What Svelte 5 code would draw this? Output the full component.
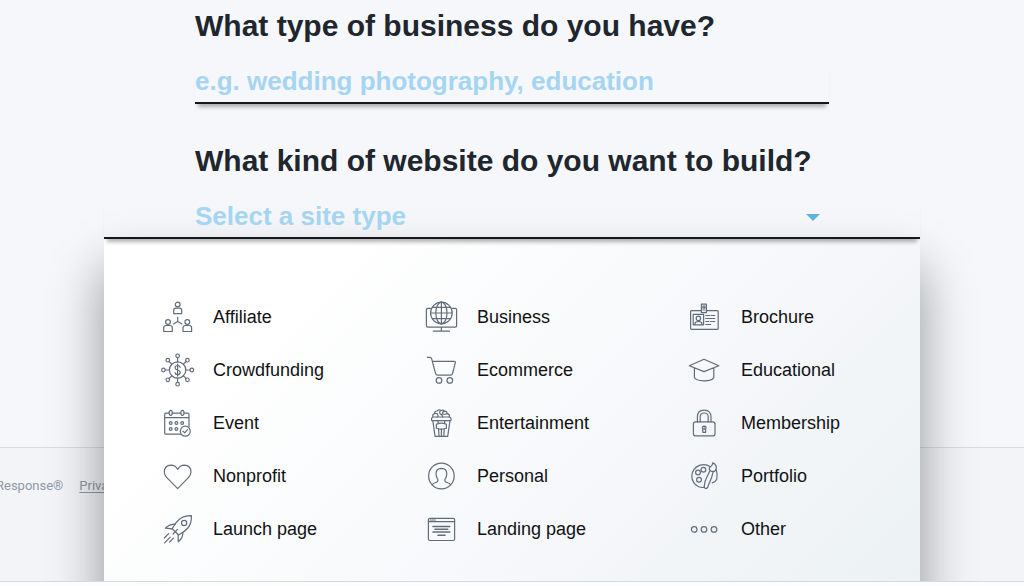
<script lang="ts">
	const siteTypes = [
		{ id: 'affiliate', label: 'Affiliate' },
		{ id: 'business', label: 'Business' },
		{ id: 'brochure', label: 'Brochure' },
		{ id: 'crowdfunding', label: 'Crowdfunding' },
		{ id: 'ecommerce', label: 'Ecommerce' },
		{ id: 'educational', label: 'Educational' },
		{ id: 'event', label: 'Event' },
		{ id: 'entertainment', label: 'Entertainment' },
		{ id: 'membership', label: 'Membership' },
		{ id: 'nonprofit', label: 'Nonprofit' },
		{ id: 'personal', label: 'Personal' },
		{ id: 'portfolio', label: 'Portfolio' },
		{ id: 'launch', label: 'Launch page' },
		{ id: 'landing', label: 'Landing page' },
		{ id: 'other', label: 'Other' }
	];

	let business = $state('');
	let siteType = $state('');
	let open = $state(true);

	function choose(id: string) {
		siteType = id;
		open = false;
	}
</script>

{#snippet icon(id: string)}
	<svg class="icon" viewBox="0 0 34 34" aria-hidden="true">
		{#if id === 'affiliate'}
			<circle cx="17.7" cy="4.5" r="2.4" />
			<path d="M13.7 13.7v-3.2q0-2.4 2.2-2.4h3.6q2.2 0 2.2 2.4v3.2z" />
			<circle cx="8" cy="22" r="2.4" />
			<path d="M3.7 31.5v-3.4q0-2.6 2.3-2.6h4q2.3 0 2.3 2.6v3.4z" />
			<circle cx="27.3" cy="22" r="2.4" />
			<path d="M23 31.5v-3.4q0-2.6 2.3-2.6h4q2.3 0 2.3 2.6v3.4z" />
			<path d="M17.7 17v4.6L13.5 24M17.7 21.6l4.2 2.4" />
		{:else if id === 'business'}
			<path d="M6.6 8.4H3.8q-1.4 0-1.4 1.4v16q0 1.4 1.4 1.4h27.4q1.4 0 1.4-1.4v-16q0-1.4-1.4-1.4H28M17.4 27.4V31M9.3 31.2h16.2" />
			<circle cx="17.4" cy="13" r="10.8" />
			<ellipse cx="17.4" cy="13" rx="5.6" ry="10.8" />
			<path d="M17.4 2.2v21.6M6.6 13h21.6M8.6 7.4h17.6M8.6 18.6h17.6" />
		{:else if id === 'brochure'}
			<path d="M13.3 10.7H3.6q-1 0-1 1v16.6q0 1 1 1h25.6q1 0 1-1V11.7q0-1-1-1H18.5" />
			<path d="M13.4 4.2h5v8.4h-5zM15 6.2h1.8v2H15zM15 10h1.8" />
			<path d="M5.2 14.4h10.4v10.4H5.2zM6.9 24.6v-1.2q0-1.6 3.5-1.9 3.5.3 3.5 1.9v1.2" />
			<circle cx="10.4" cy="18.4" r="2.2" />
			<path d="M17.8 15.5h4M23.3 15.5h3.5M17.8 18.5h9M17.8 21.5h3M22.5 21.5h4.3M17.8 24.5h5" />
		{:else if id === 'crowdfunding'}
			<circle cx="17.6" cy="17" r="8.2" />
			<circle cx="17.6" cy="2.8" r="1.8" />
			<circle cx="17.6" cy="31.2" r="1.8" />
			<circle cx="3.4" cy="17" r="1.8" />
			<circle cx="31.8" cy="17" r="1.8" />
			<circle cx="7.8" cy="7.2" r="1.8" />
			<circle cx="27.4" cy="7.2" r="1.8" />
			<circle cx="7.8" cy="26.8" r="1.8" />
			<circle cx="27.4" cy="26.8" r="1.8" />
			<path d="M17.6 4.6v4.2M17.6 25.2v4.2M5.2 17h4.2M25.8 17H30M9.1 8.5l2.7 2.7M26.1 8.5l-2.7 2.7M9.1 25.5l2.7-2.7M26.1 25.5l-2.7-2.7" />
			<path d="M20.2 14.5q-.4-2-2.6-2-2.5 0-2.5 2.2 0 1.6 2.5 2.3 2.6.7 2.6 2.4 0 2.2-2.6 2.2-2.3 0-2.6-2M17.6 11v12" />
		{:else if id === 'ecommerce'}
			<path d="M3.3 4.3h2.4q1.6 0 2 1.6l3.8 14.4q.5 1.9 2.4 1.9h12.7q1.5 0 1.9-1.5l2.8-10.9q.3-1.4-1.2-1.4H8.6" />
			<circle cx="15" cy="27.4" r="2.8" />
			<circle cx="25.8" cy="27.4" r="2.8" />
		{:else if id === 'educational'}
			<path d="M1.3 12.7L16 6.2l14.8 6.5L16 18.6zM6.4 15v9.4q1.2 3.4 9.6 3.4t9.8-3.4V15" />
		{:else if id === 'event'}
			<path d="M9.2 7.2H6q-1.3 0-1.3 1.3v18.4q0 1.3 1.3 1.3h14.5M12.3 7.2h8.5M24 7.2h3.7q1.3 0 1.3 1.3v12.3M4.7 11.6H29" />
			<ellipse cx="10.7" cy="6.8" rx="1.6" ry="2.5" />
			<ellipse cx="22.4" cy="6.8" rx="1.6" ry="2.5" />
			<circle cx="10.7" cy="17" r="1.4" />
			<circle cx="16.4" cy="17" r="1.4" />
			<circle cx="22.2" cy="17" r="1.4" />
			<circle cx="10.7" cy="23" r="1.4" />
			<circle cx="16.4" cy="23" r="1.4" />
			<circle cx="25.3" cy="25.2" r="5" />
			<path d="M23 25.2l1.7 1.6 2.9-3.2" />
		{:else if id === 'entertainment'}
			<path d="M7.7 14.6q-.7-3.4 1.6-3.6h16q2.3.2 1.6 3.6zM8.8 14.6l2.3 15.8h12.6L26 14.6M13.8 14.6l.6 3M21 14.6l-.6 3M14.6 23l.4 7.4M20.2 23l-.4 7.4M17.4 23v7.4" />
			<path d="M9 11q-1-2.6 1.6-3.3-.1-2.9 2.6-2.7 1.5-1.9 3.6-.4 2.2-1.3 3.6.5 2.6-.1 2.8 2.6 3 .7 2.1 3.3M11 7.7q2.2-.8 2.9 1.3.7 2-1 2M16.8 4.6q-2 1.6-.6 3.2 2.3.6 2.4 3.2M20.4 5.1q-2.2.7-1.6 2.9 2.4.6 4.4-.3" />
			<path d="M12.4 18.2q5-2 10 0v4q-5 2-10 0z" />
		{:else if id === 'membership'}
			<rect x="5.4" y="15.9" width="21.6" height="14" rx="2.2" />
			<path d="M9.4 15.9V11q0-6.8 6.8-6.8T23 11v4.9M12.2 15.9V11q0-4 4-4t4 4v4.9M14.8 23q-1.3-2.6 1.4-2.8 2.7.2 1.4 2.8v3.3h-2.8zM16.2 21.8v1.6" />
		{:else if id === 'nonprofit'}
			<path d="M17.7 29.6L6.6 18.3Q4.3 15.9 4.3 12.9q0-6.6 6.8-6.8 4.5 0 6.6 4.4 2.1-4.4 6.6-4.4 6.6.2 6.6 6.8 0 3-2.3 5.4z" />
		{:else if id === 'personal'}
			<circle cx="17.4" cy="17" r="12.8" />
			<path d="M8.2 25.8q.9-1.6 3.7-2.3 2.6-.7 1.9-3.1-1.6-2.3-1.8-5.5Q12 9.4 17.4 9.3q5.4.1 5.4 5.6-.2 3.2-1.8 5.5-.7 2.4 1.9 3.1 2.8.7 3.7 2.3" />
		{:else if id === 'portfolio'}
			<path d="M21.8 7.4Q17.5 4.5 11.5 6.4 4.2 9.4 3.8 17q.2 7.6 6.9 10.8 3.2 1.2 5.3.4" />
			<circle cx="10" cy="13.5" r="2.4" />
			<circle cx="15.4" cy="10.7" r="2.4" />
			<circle cx="11" cy="20.7" r="2.4" />
			<path d="M24.7 3.9q4 1.6 3.6 5.4-.5 2.8-3.2 3.4-3.2-.3-3.9-2.9 0-1.7 1.9-2.6 1.5-1 1.6-3.3zM21.8 11.9L19.4 17M25.2 12.7l-1.6 5.8M19.4 17q-2.8 4.6-3.2 10.4.2 2.4 2.3 2 1.4-.6 1.8-2.8l3.3-8.1M28.2 10.4q1.6 5.2.6 9.8-1.4 3-4.6 3.6" />
		{:else if id === 'launch'}
			<path d="M31.4 3.7q.4 7.6-3.6 12.3-3.4 4.1-9.2 7l-6.4-6.2q2.8-5.8 6.9-9.3 4.7-3.9 12.3-3.8z" />
			<circle cx="24.1" cy="11" r="2.6" />
			<path d="M15.5 12.1q-6-.1-10.2 4.1l7 .7M22.9 20.3q.2 5.6-4.6 9.5l-.2-6.6M17.6 17.4L13 22M8.7 21.6L4.4 26M10.2 25.2l-5.6 5.6M13.4 26.2L9.6 30" />
		{:else if id === 'landing'}
			<rect x="4.4" y="6.3" width="26.2" height="22.2" rx="1.4" />
			<path d="M4.4 9.6h26.2M6.1 8h1M8.2 8h1M10.3 8h1" />
			<path class="bold" d="M9 14.5h16.8M11 17.3h12.8M9 20h16.8M14 23.3h7" />
		{:else}
			<circle cx="6.2" cy="17.4" r="2.8" />
			<circle cx="16" cy="17.4" r="2.8" />
			<circle cx="26" cy="17.4" r="2.8" />
		{/if}
	</svg>
{/snippet}

<div class="page">
	<main>
		<form class="survey">
			<div class="question">
				<label for="business">What type of business do you have?</label>
				<div class="field">
					<input
						id="business"
						type="text"
						placeholder="e.g. wedding photography, education"
						bind:value={business}
					/>
				</div>
			</div>

			<div class="question">
				<label for="site-type">What kind of website do you want to build?</label>
				<div class="field wide">
					<select
						id="site-type"
						class:empty={!siteType}
						bind:value={siteType}
						onfocus={() => open = true}
					>
						<option value="">Select a site type</option>
						{#each siteTypes as type}
							<option value={type.id}>{type.label}</option>
						{/each}
					</select>
					<svg class="caret" viewBox="0 0 14 7" aria-hidden="true">
						<path d="M0 0h14L7 7z" />
					</svg>
				</div>

				{#if open}
					<div class="menu">
						{#each siteTypes as type}
							<button type="button" class="choice" onclick={() => choose(type.id)}>
								{@render icon(type.id)}
								<span>{type.label}</span>
							</button>
						{/each}
					</div>
				{/if}
			</div>
		</form>
	</main>

	<footer>
		<span>Response®</span>
		<a href="#privacy">Privacy policy</a>
	</footer>
</div>

<style>
	:global(body) {
		background: #fdfdfe;
	}

	.page {
		box-sizing: border-box;
		display: flex;
		flex-direction: column;
		min-height: calc(100vh - 4px);
		overflow: hidden;
		background: #f5f7fb;
		border-bottom: 1px solid #d5d9de;
		font-family: 'Liberation Sans', Arial, Helvetica, sans-serif;
	}

	main {
		flex: 1;
		padding: 8px 96px 0;
	}

	.survey {
		display: flex;
		flex-direction: column;
		gap: 39px;
		max-width: 634px;
		margin: 0 auto;
	}

	.question {
		position: relative;
		display: flex;
		flex-direction: column;
		gap: 18px;
	}

	label {
		color: #20262d;
		font-size: 30px;
		font-weight: 700;
		line-height: 36px;
		white-space: nowrap;
	}

	.field {
		position: relative;
		z-index: 2;
		display: flex;
		align-items: center;
		border-bottom: 2px solid #17171b;
		box-shadow: 0 6px 4px -3px rgba(0, 0, 0, 0.3);
	}

	.wide {
		margin: 0 -91px;
		padding: 0 91px;
	}

	input,
	select {
		box-sizing: border-box;
		flex: 1;
		min-width: 0;
		height: 40px;
		padding: 0 0 2px;
		background: none;
		border: none;
		outline: none;
		color: #20262d;
		font-family: inherit;
		font-size: 26px;
		font-weight: 700;
	}

	select {
		appearance: none;
		cursor: pointer;
	}

	input::placeholder,
	select.empty {
		color: #a5d5f0;
		opacity: 1;
	}

	.caret {
		width: 14px;
		height: 7px;
		margin-right: 9px;
		fill: #5fb2de;
		pointer-events: none;
	}

	.menu {
		position: absolute;
		top: 100%;
		left: -91px;
		right: -91px;
		z-index: 1;
		display: grid;
		grid-template-columns: repeat(3, 1fr);
		gap: 19px 88px;
		padding: 61px 56px;
		background: linear-gradient(135deg, #ffffff 20%, #f5f7fa 65%, #ebf1f3);
		box-shadow: 0 30px 50px rgba(0, 0, 0, 0.4);
	}

	.choice {
		display: flex;
		align-items: center;
		gap: 19px;
		padding: 0;
		background: none;
		border: none;
		color: #111214;
		font-family: inherit;
		font-size: 18px;
		line-height: 24px;
		white-space: nowrap;
		cursor: pointer;
	}

	.choice:hover {
		color: #2a8fc4;
	}

	.icon {
		flex: none;
		width: 34px;
		height: 34px;
		fill: none;
		stroke: #626d7b;
		stroke-width: 1.2;
		stroke-linecap: round;
		stroke-linejoin: round;
	}

	.bold {
		stroke-width: 1.6;
	}

	footer {
		display: flex;
		gap: 16px;
		margin-left: -4px;
		padding: 28px 0 85px;
		background: #f2f4f8;
		border-top: 1px solid #d9dde3;
		color: #8f99a6;
		font-family: Roboto, sans-serif;
		font-size: 13px;
		line-height: 20px;
	}

	footer a {
		color: inherit;
		text-underline-offset: 2px;
	}
</style>
